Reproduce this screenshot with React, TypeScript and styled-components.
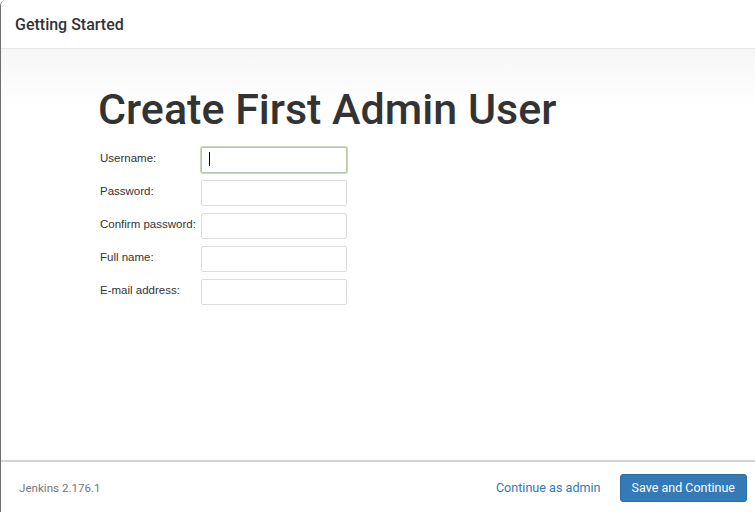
import React from "react";
import styled, { createGlobalStyle } from "styled-components";

const Global = createGlobalStyle`
  html, body { margin: 0; padding: 0; background: #fff; }
  body { font-family: Roboto, "Liberation Sans", Arial, sans-serif; }
  * { box-sizing: border-box; }
`;

const Modal = styled.div`
  width: 755px;
  height: 512px;
  display: flex;
  flex-direction: column;
  background: #fff;
  border-left: 1px solid #6f6f6f;
  border-top-left-radius: 6px;
  overflow: hidden;
`;

const Header = styled.div`
  height: 49px;
  flex: none;
  display: flex;
  align-items: center;
  padding: 0 0 0 14px;
  border-bottom: 1px solid #e5e5e5;
  background: #fff;
`;

const HeaderTitle = styled.h4`
  margin: 0;
  font-family: Roboto, sans-serif;
  font-weight: 500;
  font-size: 16px;
  color: #333;
`;

const Body = styled.div`
  flex: 1;
  background: linear-gradient(to bottom, #f6f6f6 0px, #ffffff 60px);
  padding: 35px 0 0 97px;
`;

const Title = styled.h1`
  margin: 0 0 13px;
  font-family: Roboto, sans-serif;
  font-weight: 500;
  font-size: 43px;
  line-height: 50px;
  color: #333;
`;

const Form = styled.div`
  display: grid;
  grid-template-columns: 101px 146px;
  row-gap: 7px;
  padding-left: 2px;
`;

const Label = styled.label`
  font-family: "Liberation Sans", Arial, sans-serif;
  font-size: 11.5px;
  color: #333;
  padding-top: 5px;
`;

const FieldWrap = styled.div`
  position: relative;
  height: 26px;
`;

const Input = styled.input<{ $focused?: boolean }>`
  width: 146px;
  height: 26px;
  margin: 0;
  padding: 2px 6px;
  border: 1px solid ${(p) => (p.$focused ? "#b5c9a6" : "#dcdcdc")};
  box-shadow: ${(p) => (p.$focused ? "0 0 0 1px #c8d6bc" : "none")};
  border-radius: 2px;
  background: #fff;
  font-family: "Liberation Sans", Arial, sans-serif;
  font-size: 12px;
  outline: none;
  caret-color: transparent;
`;

const Caret = styled.span`
  position: absolute;
  left: 8px;
  top: 5px;
  width: 1px;
  height: 14px;
  background: #000;
`;

const Footer = styled.div`
  height: 52px;
  flex: none;
  display: flex;
  align-items: center;
  padding: 0 8px 0 18px;
  border-top: 2px solid #d4d4d4;
  background: #fff;
`;

const Version = styled.span`
  font-family: Roboto, sans-serif;
  font-size: 11.6px;
  color: #777;
  flex: 1;
  padding-top: 2px;
`;

const LinkButton = styled.a`
  font-family: Roboto, sans-serif;
  font-size: 12.6px;
  color: #337ab7;
  text-decoration: none;
  margin-right: 19px;
  cursor: pointer;
`;

const PrimaryButton = styled.button`
  height: 28px;
  padding: 0 11px;
  border: 1px solid #2e6da4;
  border-radius: 3px;
  background: #337ab7;
  color: #fff;
  font-family: Roboto, sans-serif;
  font-size: 12.5px;
  cursor: pointer;
  margin-top: 1px;
`;

const fields = [
  { label: "Username:", type: "text", focused: true },
  { label: "Password:", type: "password" },
  { label: "Confirm password:", type: "password" },
  { label: "Full name:", type: "text" },
  { label: "E-mail address:", type: "text" },
];

export default function App() {
  return (
    <>
      <Global />
      <Modal>
        <Header>
          <HeaderTitle>Getting Started</HeaderTitle>
        </Header>
        <Body>
          <Title>Create First Admin User</Title>
          <Form>
            {fields.map((f) => (
              <React.Fragment key={f.label}>
                <Label>{f.label}</Label>
                <FieldWrap>
                  <Input type={f.type} $focused={f.focused} readOnly />
                  {f.focused && <Caret />}
                </FieldWrap>
              </React.Fragment>
            ))}
          </Form>
        </Body>
        <Footer>
          <Version>Jenkins 2.176.1</Version>
          <LinkButton>Continue as admin</LinkButton>
          <PrimaryButton>Save and Continue</PrimaryButton>
        </Footer>
      </Modal>
    </>
  );
}
